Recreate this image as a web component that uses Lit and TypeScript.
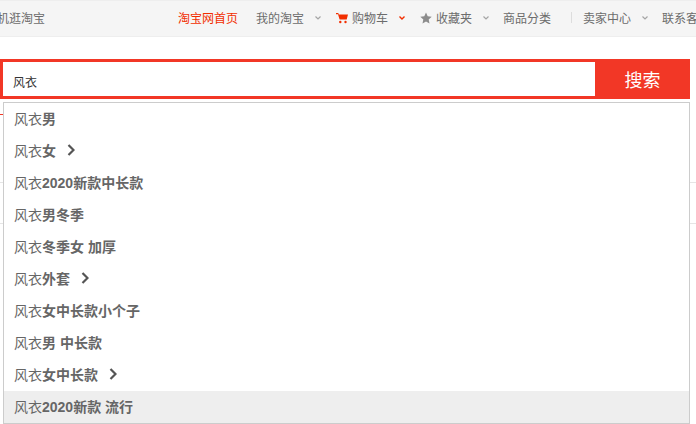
import { LitElement, html, css } from 'lit';
import { customElement } from 'lit/decorators.js';

const chevron = html`<svg class="caret" width="6" height="4" viewBox="0 0 6 4"><path d="M.5.5l2.500 2.500L5.500.5" fill="none" stroke="currentColor" stroke-width="1.200"/></svg>`;

const suggestions = [
  { bold: '男', more: false },
  { bold: '女', more: true },
  { bold: '2020新款中长款', more: false },
  { bold: '男冬季', more: false },
  { bold: '冬季女 加厚', more: false },
  { bold: '外套', more: true },
  { bold: '女中长款小个子', more: false },
  { bold: '男 中长款', more: false },
  { bold: '女中长款', more: true },
  { bold: '2020新款 流行', more: false },
];

@customElement('app-root')
export class AppRoot extends LitElement {
  static styles = css`
    :host {
      display: block;
      position: relative;
      width: 696px;
      height: 424px;
      overflow: hidden;
      background: #fff;
      font-family: "Liberation Sans", "Noto Sans CJK SC", sans-serif;
      font-size: 12px;
      color: #6c6c6c;
    }
    .topbar {
      height: 35px;
      background: #f5f5f5;
      border-top: 1px solid #eee;
      border-bottom: 1px solid #eee;
      display: flex;
      align-items: center;
      white-space: nowrap;
      overflow: hidden;
    }
    .mobile { margin-left: -3px; margin-bottom: 2px; width: 181px; flex: none; }
    .nav { display: flex; align-items: center; flex: none; margin-bottom: 2px; }
    .nav span, .nav svg { flex: none; }
    .home { color: #f22e00; margin-right: 18px; }
    .caret { margin-left: 11px; color: #a5a5a5; }
    .caret.hot { color: #f22e00; }
    .cart { margin-left: 15px; margin-right: 4px; }
    .star { margin-left: 15px; margin-right: 4px; }
    .plain { margin-left: 14px; }
    .divider { width: 1px; height: 11px; background: #ddd; margin: 0 11px 0 20px; }
    .after { margin-left: 14px; }
    .search {
      display: flex;
      width: 690px;
      height: 40px;
      margin-top: 22px;
      box-sizing: border-box;
      background: #f23726;
      padding: 3px 0 3px 3px;
    }
    .input {
      width: 592px;
      height: 34px;
      background: #fff;
      color: #333;
      line-height: 34px;
      padding: 4px 0 0 10px;
      box-sizing: border-box;
    }
    .btn {
      flex: 1;
      color: #fff;
      font-size: 18px;
      text-align: center;
      line-height: 38px;
    }
    .rule { position: absolute; height: 1px; background: #e5e5e5; }
    .rule.red { background: #f23726; left: 0; width: 3px; top: 114px; }
    .rule.left { left: 0; width: 3px; }
    .rule.right { left: 690px; width: 6px; }
    .rule.upper { top: 182px; }
    .rule.lower { top: 223px; }
    .dropdown {
      position: absolute;
      left: 3px;
      top: 102px;
      width: 687px;
      box-sizing: border-box;
      border: 1px solid #ccc;
      background: #fff;
      font-size: 14px;
    }
    .row {
      height: 32px;
      padding-left: 10px;
      padding-bottom: 2px;
      box-sizing: border-box;
      display: flex;
      align-items: center;
      color: #666;
    }
    .row.on { background: #eee; }
    .row b { font-weight: 700; white-space: pre; }
    .more { margin-left: 11px; }
  `;

  render() {
    return html`
      <div class="topbar">
        <span class="mobile">机逛淘宝</span>
        <div class="nav">
          <span class="home">淘宝网首页</span>
          <span>我的淘宝</span>${chevron}
          <svg class="cart" width="12" height="12" viewBox="0 0 12 12"><path d="M0 1h2.300l.5 1.600H12l-1.300 5H3.600L2 2.200H0z" fill="#f22e00"/><circle cx="4.300" cy="10" r="1.200" fill="#f22e00"/><circle cx="9.500" cy="10" r="1.200" fill="#f22e00"/></svg>
          <span>购物车</span>
          <svg class="caret hot" width="6" height="4" viewBox="0 0 6 4"><path d="M.5.5l2.500 2.500L5.500.5" fill="none" stroke="currentColor" stroke-width="1.400"/></svg>
          <svg class="star" width="12" height="12" viewBox="0 0 12 12"><path d="M6 .5l1.700 3.700 4 .5-3 2.700.8 4L6 9.400l-3.500 2 .8-4-3-2.700 4-.5z" fill="#8c8c8c"/></svg>
          <span>收藏夹</span>${chevron}
          <span class="plain">商品分类</span>
          <i class="divider"></i>
          <span>卖家中心</span>${chevron}
          <span class="after">联系客服</span>
        </div>
      </div>
      <div class="search">
        <div class="input">风衣</div>
        <div class="btn">搜索</div>
      </div>
      <div class="rule red"></div>
      <div class="rule left upper"></div>
      <div class="rule right upper"></div>
      <div class="rule left lower"></div>
      <div class="rule right lower"></div>
      <div class="dropdown">
        ${suggestions.map((s, i) => html`
          <div class="row ${i === 9 ? 'on' : ''}">
            <span>风衣</span><b>${s.bold}</b>
            ${s.more ? html`<svg class="more" width="8" height="12" viewBox="0 0 8 12"><path d="M1.500 1l5 5-5 5" fill="none" stroke="#555" stroke-width="2.200"/></svg>` : ''}
          </div>`)}
      </div>
    `;
  }
}
